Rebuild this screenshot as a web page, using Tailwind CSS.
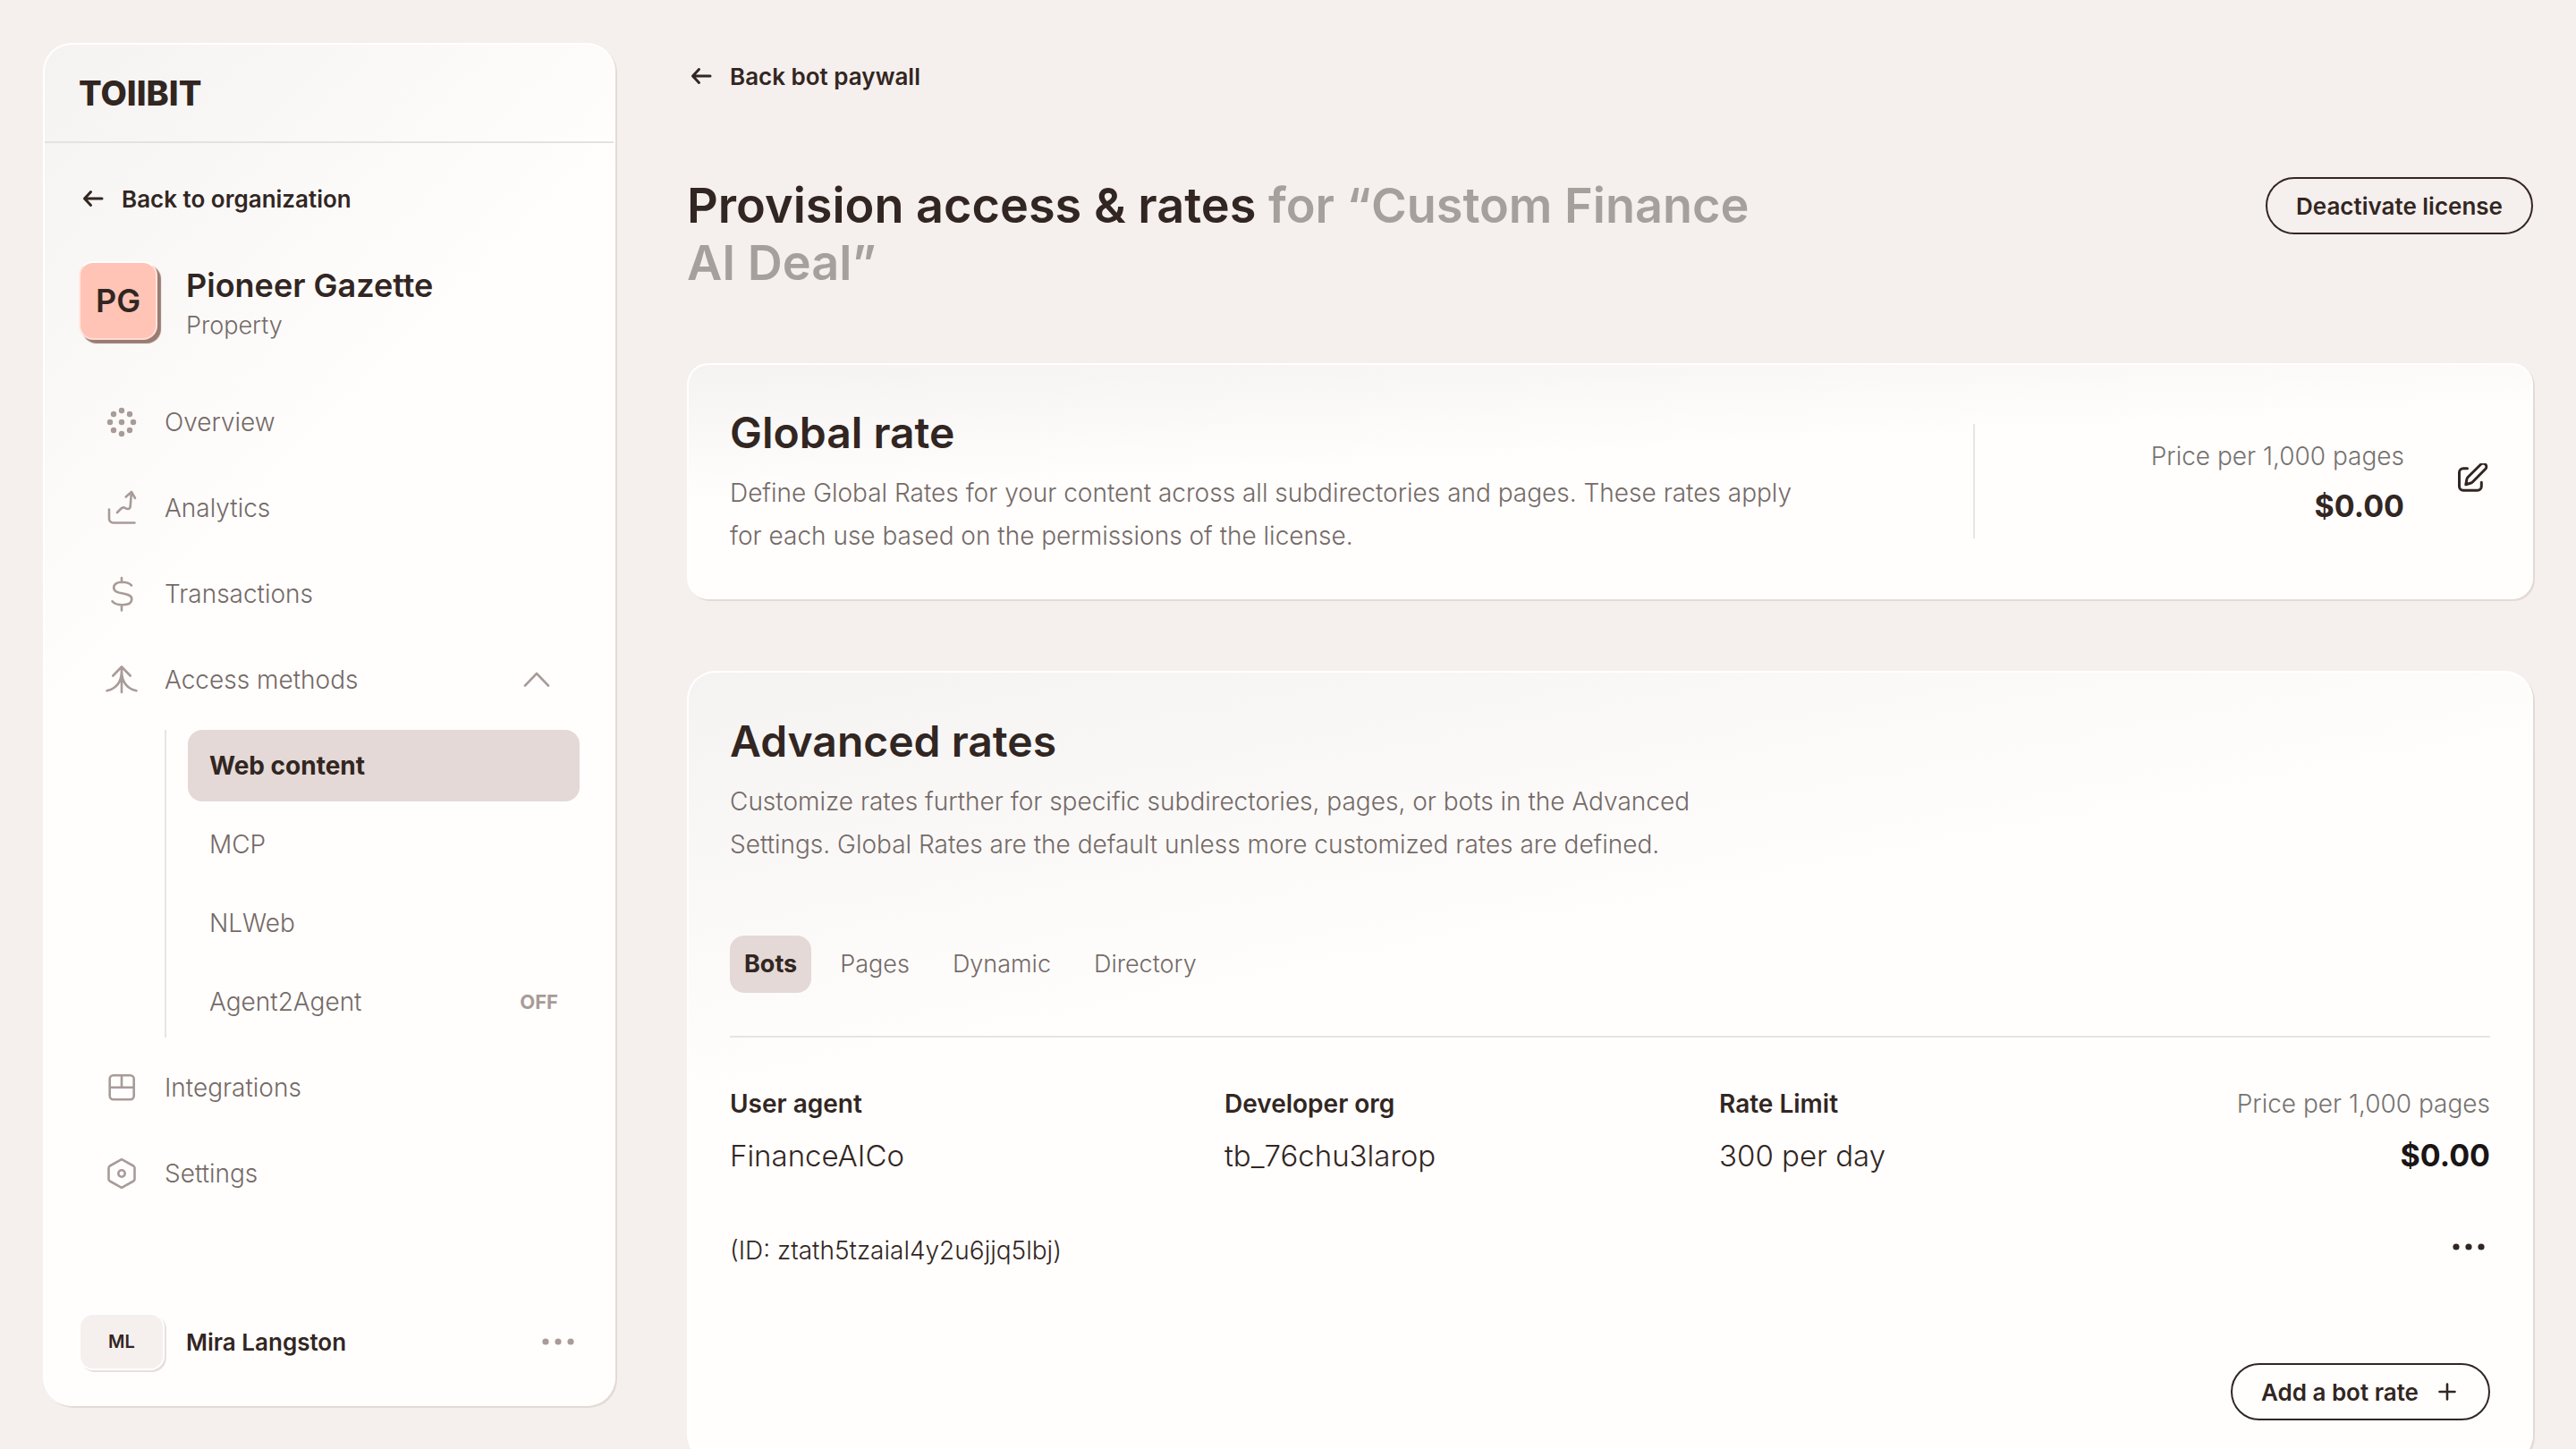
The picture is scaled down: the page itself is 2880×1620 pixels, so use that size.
<!DOCTYPE html>
<html lang="en">
<head>
    <meta charset="UTF-8">
    <meta name="viewport" content="width=device-width, initial-scale=1.0">
    <title>Provision access & rates - TollBit</title>
    <!-- Tailwind CSS -->
    <script src="https://cdn.jsdelivr.net/npm/@tailwindcss/browser@4"></script>
</head>
<body class="bg-[#f5efed] font-[Inter,sans-serif] text-[28px] font-light text-[#322622]">
    <div class="flex h-screen gap-20 overflow-hidden p-12">

        <!-- Sidebar -->
        <aside class="flex w-[640px] shrink-0 flex-col rounded-[32px] border-2 border-t-white border-l-white border-r-[#fffefd] border-b-[#fffefd] bg-[linear-gradient(135deg,#f4f3f2,#fffefd_36%)] shadow-[2px_2px_0_#e3dad7]">
            <div class="flex h-[110px] items-center border-b-2 border-[#e3e2e1] px-[38px]">
                <a href="#" class="text-[38px] font-extrabold">TOIIBIT</a>
            </div>

            <div class="flex grow flex-col px-[38px] pt-[34px] pb-[38px]">
                <a href="#" class="flex h-14 items-center gap-4 text-[26px] font-semibold">
                    <svg class="size-8" viewBox="0 0 32 32" fill="none" stroke="currentColor" stroke-width="3" stroke-linecap="round" stroke-linejoin="round"><path d="M26 16H6.500M13.500 8.500L6.500 16l7 7.500"/></svg>
                    Back to organization
                </a>

                <!-- Property -->
                <div class="mt-[42px] flex items-start gap-8">
                    <div class="flex size-[88px] shrink-0 items-center justify-center rounded-2xl border-2 border-t-white border-l-[#ffe9e3] border-r-[#ffe4dd] border-b-[#ffdcd3] bg-[#ffc4b6] text-4xl font-semibold shadow-[4px_4px_1px_#9a7b72]">PG</div>
                    <div class="pt-0.5">
                        <div class="text-4xl leading-[50px] font-semibold">Pioneer Gazette</div>
                        <div class="text-[27px] leading-10 text-[#756a67]">Property</div>
                    </div>
                </div>

                <!-- Navigation -->
                <nav class="mt-10 pl-7 text-[#756a67]">
                    <a href="#" class="flex h-24 items-center gap-7">
                        <svg class="size-10 text-[#a89b98]" viewBox="0 0 40 40" fill="currentColor"><circle cx="20" cy="20" r="3.200"/><circle cx="20" cy="7" r="3.200"/><circle cx="20" cy="33" r="3.200"/><circle cx="7" cy="20" r="3.200"/><circle cx="33" cy="20" r="3.200"/><circle cx="11" cy="11" r="3.200"/><circle cx="29" cy="11" r="3.200"/><circle cx="11" cy="29" r="3.200"/><circle cx="29" cy="29" r="3.200"/></svg>
                        Overview
                    </a>
                    <a href="#" class="flex h-24 items-center gap-7">
                        <svg class="size-10 text-[#a89b98]" viewBox="0 0 40 40" fill="none" stroke="currentColor" stroke-width="2.600" stroke-linecap="round" stroke-linejoin="round"><path d="M6 21.500V32a4.500 4.500 0 0 0 4.500 4.500h24"/><path d="M15 25l4.500-4.500c1.500-1.500 3-1.500 4.500-.500 2.500 1.700 5.500 1.300 5.700-1.800L31 2M24.700 7.500L31 2l4 6.800"/></svg>
                        Analytics
                    </a>
                    <a href="#" class="flex h-24 items-center gap-7">
                        <svg class="size-10 text-[#a89b98]" viewBox="0 0 40 40" fill="none" stroke="currentColor" stroke-width="2.600" stroke-linecap="round" stroke-linejoin="round"><path d="M20 2v5M20 32.500v6M31 10.500C28.500 8 24.500 6.800 20.500 6.800c-5.500 0-9.300 2.300-9.300 6.200C11.200 22 31.300 17 31.300 25.700c0 4.300-4.300 6.500-10.300 6.500-5 0-9.500-1.500-11.500-4"/></svg>
                        Transactions
                    </a>
                    <button type="button" aria-expanded="true" class="flex h-24 w-full items-center gap-7 pr-7">
                        <svg class="size-10 text-[#a89b98]" viewBox="0 0 40 40" fill="none" stroke="currentColor" stroke-width="2.600" stroke-linecap="round" stroke-linejoin="round"><path d="M20 5.500V34M10.300 15.500L20 5.500l9.700 10M3.500 32.300C14 30 20 23 20 9.500M36.500 32.300C26 30 20 23 20 9.500"/></svg>
                        Access methods
                        <svg class="ml-auto size-10 text-[#a89b98]" viewBox="0 0 40 40" fill="none" stroke="currentColor" stroke-width="2.600" stroke-linecap="round" stroke-linejoin="round"><path d="M7 26.500L20 13l13 13.500"/></svg>
                    </button>
                    <div class="my-2 ml-[68px] flex flex-col gap-2 border-l-2 border-[#e6e5e4] pl-6">
                        <a href="#" class="flex h-20 items-center rounded-2xl bg-[#e4d9d6] px-6 font-bold text-[#322622]">Web content</a>
                        <a href="#" class="flex h-20 items-center px-6">MCP</a>
                        <a href="#" class="flex h-20 items-center px-6">NLWeb</a>
                        <a href="#" class="flex h-20 items-center justify-between px-6">Agent2Agent <span class="text-[22px] font-bold text-[#a89b98]">OFF</span></a>
                    </div>
                    <a href="#" class="flex h-24 items-center gap-7">
                        <svg class="size-10 text-[#a89b98]" viewBox="0 0 40 40" fill="none" stroke="currentColor" stroke-width="2.600" stroke-linejoin="round"><rect x="6.700" y="6.300" width="27" height="27" rx="4"/><path d="M6.700 19.700h27M20 6.300v13.400"/></svg>
                        Integrations
                    </a>
                    <a href="#" class="flex h-24 items-center gap-7">
                        <svg class="size-10 text-[#a89b98]" viewBox="0 0 40 40" fill="none" stroke="currentColor" stroke-width="2.600" stroke-linejoin="round"><path d="M20 4.200l13.200 7.300q1.300.800 1.300 2.300v12.400q0 1.500-1.300 2.300L20 35.800 6.800 28.500q-1.300-.800-1.300-2.300V13.800q0-1.500 1.300-2.300z"/><circle cx="20" cy="20" r="3.700"/></svg>
                        Settings
                    </a>
                </nav>

                <!-- User -->
                <div class="mt-auto flex items-center gap-6">
                    <div class="flex h-16 w-24 items-center justify-center rounded-2xl border-2 border-white bg-[#f5efee] text-xl font-semibold shadow-[2px_2px_0_#e8dfdd]">ML</div>
                    <div class="text-[26px] font-semibold">Mira Langston</div>
                    <button type="button" aria-label="Account menu" class="ml-auto text-[#a89b98]">
                        <svg class="size-12" viewBox="0 0 48 48" fill="currentColor"><circle cx="10" cy="24" r="3.600"/><circle cx="24" cy="24" r="3.600"/><circle cx="38" cy="24" r="3.600"/></svg>
                    </button>
                </div>
            </div>
        </aside>

        <!-- Main Content -->
        <main class="min-w-0 grow">
            <a href="#" class="flex h-[74px] items-center gap-4 text-[26px] font-semibold">
                <svg class="size-8" viewBox="0 0 32 32" fill="none" stroke="currentColor" stroke-width="3" stroke-linecap="round" stroke-linejoin="round"><path d="M26 16H6.500M13.500 8.500L6.500 16l7 7.500"/></svg>
                Back bot paywall
            </a>

            <header class="mt-19 flex items-start justify-between">
                <h1 class="max-w-[1220px] text-[54px] leading-[64px] font-semibold">Provision access &amp; rates <span class="text-[#a6a09d]">for “Custom Finance AI Deal”</span></h1>
                <button type="button" class="h-16 rounded-full border-2 border-[#322622] px-8 text-[26px] font-semibold">Deactivate license</button>
            </header>

            <!-- Global rate -->
            <section class="mt-20 flex items-center rounded-3xl border-2 border-t-white border-l-white border-r-[#fffefd] border-b-[#fffefd] bg-[linear-gradient(177deg,#f4f3f2,#fffefd_42%)] px-[46px] py-[45px] shadow-[2px_2px_0_#e3dad7]">
                <div class="max-w-[1200px]">
                    <h2 class="text-5xl leading-[62px] font-semibold">Global rate</h2>
                    <p class="mt-3 leading-12 text-[#756a67]">Define Global Rates for your content across all subdirectories and pages. These rates apply for each use based on the permissions of the license.</p>
                </div>
                <div class="ml-auto flex h-32 w-[578px] items-center justify-end gap-14 border-l-2 border-[#e6e5e4]">
                    <dl class="text-right">
                        <dt class="leading-14 text-[#767270]">Price per 1,000 pages</dt>
                        <dd class="text-[34px] leading-14 font-bold">$0.00</dd>
                    </dl>
                    <button type="button" aria-label="Edit global rate">
                        <svg class="size-10" viewBox="0 4 40 40" fill="none" stroke="currentColor" stroke-width="3" stroke-linecap="round" stroke-linejoin="round"><path d="M14.500 9.800H10a4.500 4.500 0 0 0-4.500 4.500v15.500a4.500 4.500 0 0 0 4.500 4.500h15.800a4.500 4.500 0 0 0 4.500-4.500v-4.500"/><path d="M12.800 27.700l1.200-6.200q.300-1.200 1.100-2L29.500 5.200a3.600 3.600 0 0 1 5.300 5.100L20.500 24.800q-.800.800-2 1.200z"/></svg>
                    </button>
                </div>
            </section>

            <!-- Advanced rates -->
            <section class="mt-20 rounded-[32px] border-2 border-t-white border-l-white border-r-[#fffefd] border-b-[#fffefd] bg-[linear-gradient(169deg,#f4f3f2,#fffefd_38%)] p-[46px] shadow-[2px_2px_0_#e3dad7]">
                <h2 class="text-5xl leading-[62px] font-semibold">Advanced rates</h2>
                <p class="mt-3 max-w-[1160px] leading-12 text-[#756a67]">Customize rates further for specific subdirectories, pages, or bots in the Advanced Settings. Global Rates are the default unless more customized rates are defined.</p>

                <div role="tablist" class="mt-[78px] flex gap-4 border-b-2 border-[#e6e5e4] pb-12 text-[27px] text-[#756a67]">
                    <button type="button" role="tab" aria-selected="true" class="h-16 rounded-2xl bg-[#e4d9d6] px-4 font-bold text-[#322622]">Bots</button>
                    <button type="button" role="tab" class="h-16 px-4">Pages</button>
                    <button type="button" role="tab" class="h-16 px-4">Dynamic</button>
                    <button type="button" role="tab" class="h-16 px-4">Directory</button>
                </div>

                <dl class="mt-12 grid grid-cols-[553fr_553fr_553fr_309fr]">
                    <div>
                        <dt class="leading-13 font-semibold">User agent</dt>
                        <dd class="text-[33px] leading-16">FinanceAICo</dd>
                    </div>
                    <div>
                        <dt class="leading-13 font-semibold">Developer org</dt>
                        <dd class="text-[33px] leading-16">tb_76chu3larop</dd>
                    </div>
                    <div>
                        <dt class="leading-13 font-semibold">Rate Limit</dt>
                        <dd class="text-[33px] leading-16">300 per day</dd>
                    </div>
                    <div class="text-right">
                        <dt class="leading-13 text-[#767270]">Price per 1,000 pages</dt>
                        <dd class="text-[34px] leading-16 font-bold text-[#1b1515]">$0.00</dd>
                    </div>
                </dl>

                <div class="mt-12 flex h-13 items-start justify-between leading-13">
                    <span>(ID: ztath5tzaial4y2u6jjq5lbj)</span>
                    <button type="button" aria-label="Bot rate menu">
                        <svg class="h-11 w-12" viewBox="0 0 48 44" fill="currentColor"><circle cx="10" cy="22" r="3.600"/><circle cx="24" cy="22" r="3.600"/><circle cx="38" cy="22" r="3.600"/></svg>
                    </button>
                </div>

                <div class="mt-25 flex justify-end">
                    <button type="button" class="flex h-16 items-center gap-5 rounded-full border-2 border-[#322622] pr-[34px] pl-8 text-[26px] font-semibold">
                        Add a bot rate
                        <svg class="size-6" viewBox="0 0 24 24" fill="none" stroke="currentColor" stroke-width="2.600" stroke-linecap="round"><path d="M12 3.500v17M3.500 12h17"/></svg>
                    </button>
                </div>
            </section>
        </main>
    </div>
</body>
</html>
